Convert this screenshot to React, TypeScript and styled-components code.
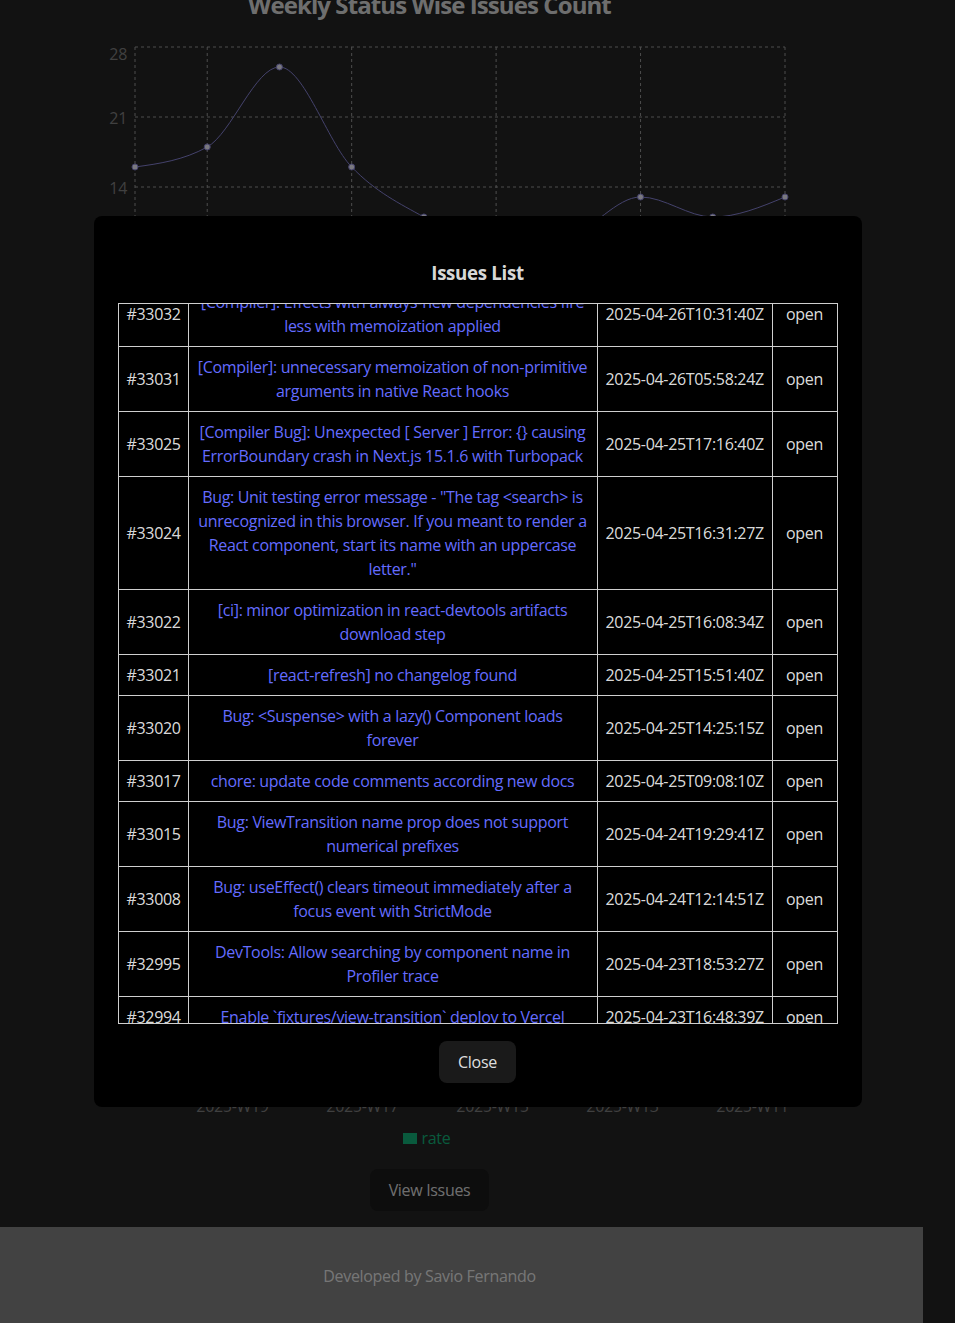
import React, { useLayoutEffect, useRef } from 'react';
import styled, { createGlobalStyle } from 'styled-components';

const GlobalStyle = createGlobalStyle`
  html,
  body {
    margin: 0;
    padding: 0;
  }

  body {
    background-color: #242424;
    color: rgba(255, 255, 255, 0.87);
    font-family: 'Open Sans', 'Noto Sans', sans-serif;
    font-size: 16px;
    line-height: 1.5;
    letter-spacing: -0.02em;
    overflow: hidden;
  }
`;

type Issue = {
  number: number;
  title: string;
  createdAt: string;
  state: string;
};

const issues: Issue[] = [
  {
    number: 33032,
    title:
      '[Compiler]: Effects with always-new dependencies fire less with memoization applied',
    createdAt: '2025-04-26T10:31:40Z',
    state: 'open',
  },
  {
    number: 33031,
    title:
      '[Compiler]: unnecessary memoization of non-primitive arguments in native React hooks',
    createdAt: '2025-04-26T05:58:24Z',
    state: 'open',
  },
  {
    number: 33025,
    title:
      '[Compiler Bug]: Unexpected [ Server ] Error: {} causing ErrorBoundary crash in Next.js 15.1.6 with Turbopack',
    createdAt: '2025-04-25T17:16:40Z',
    state: 'open',
  },
  {
    number: 33024,
    title:
      'Bug: Unit testing error message - "The tag <search> is unrecognized in this browser. If you meant to render a React component, start its name with an uppercase letter."',
    createdAt: '2025-04-25T16:31:27Z',
    state: 'open',
  },
  {
    number: 33022,
    title: '[ci]: minor optimization in react-devtools artifacts download step',
    createdAt: '2025-04-25T16:08:34Z',
    state: 'open',
  },
  {
    number: 33021,
    title: '[react-refresh] no changelog found',
    createdAt: '2025-04-25T15:51:40Z',
    state: 'open',
  },
  {
    number: 33020,
    title: 'Bug: <Suspense> with a lazy() Component loads forever',
    createdAt: '2025-04-25T14:25:15Z',
    state: 'open',
  },
  {
    number: 33017,
    title: 'chore: update code comments according new docs',
    createdAt: '2025-04-25T09:08:10Z',
    state: 'open',
  },
  {
    number: 33015,
    title: 'Bug: ViewTransition name prop does not support numerical prefixes',
    createdAt: '2025-04-24T19:29:41Z',
    state: 'open',
  },
  {
    number: 33008,
    title:
      'Bug: useEffect() clears timeout immediately after a focus event with StrictMode',
    createdAt: '2025-04-24T12:14:51Z',
    state: 'open',
  },
  {
    number: 32995,
    title: 'DevTools: Allow searching by component name in Profiler trace',
    createdAt: '2025-04-23T18:53:27Z',
    state: 'open',
  },
  {
    number: 32994,
    title: 'Enable `fixtures/view-transition` deploy to Vercel',
    createdAt: '2025-04-23T16:48:39Z',
    state: 'open',
  },
  {
    number: 32993,
    title: 'Bug: useActionState pending flag stuck after navigation',
    createdAt: '2025-04-23T14:02:11Z',
    state: 'open',
  },
];

// weeks newest -> oldest, same order as the x axis
const weeks = [
  '2025-W20',
  '2025-W19',
  '2025-W18',
  '2025-W17',
  '2025-W16',
  '2025-W15',
  '2025-W14',
  '2025-W13',
  '2025-W12',
  '2025-W11',
];
const openCounts = [16, 18, 26, 16, 11, 8, 9, 13, 11, 13];
const closeRates = [42, 55, 61, 38, 47, 52, 44, 58, 49, 40];

const PLOT_LEFT = 135;
const PLOT_RIGHT = 785;
const STEP = (PLOT_RIGHT - PLOT_LEFT) / (weeks.length - 1);
const TICK_INDEXES = [0, 1, 3, 5, 7, 9];

/* ---------- page ---------- */

const Page = styled.div`
  width: 923px;
`;

const Main = styled.main`
  width: 859px;
  margin-top: -13px;
  text-align: center;
`;

const ChartSection = styled.section<{ $gap?: number }>`
  margin-top: ${(p) => p.$gap ?? 0}px;
`;

const ChartTitle = styled.h2`
  margin: 0;
  font-size: 24px;
  line-height: 36px;
  font-weight: 700;
  letter-spacing: -0.038em;
`;

const ChartSvg = styled.svg`
  display: block;
  font-size: 16px;
`;

const Legend = styled.div`
  display: flex;
  justify-content: center;
  align-items: center;
  gap: 5px;
  margin-top: 7px;
  margin-left: -6px;
  line-height: 24px;
  color: #12b47a;
`;

const LegendSwatch = styled.span`
  width: 14px;
  height: 11px;
  background-color: #12b47a;
`;

const Button = styled.button`
  border: none;
  border-radius: 8px;
  padding: 9px 19px;
  font-family: inherit;
  font-size: 16px;
  font-weight: 500;
  line-height: 24px;
  letter-spacing: inherit;
  color: rgba(255, 255, 255, 0.87);
  background-color: #1a1a1a;
  cursor: pointer;
`;

const ViewButton = styled(Button)`
  margin-top: 19px;
`;

const Footer = styled.footer`
  margin-top: 16px;
  padding: 37px 64px 37px 0;
  background-color: #848484;
  text-align: center;
`;

/* ---------- modal ---------- */

const Overlay = styled.div`
  position: fixed;
  inset: 0;
  display: flex;
  align-items: center;
  justify-content: center;
  background-color: rgba(0, 0, 0, 0.5);
`;

const ModalCard = styled.div`
  width: 768px;
  box-sizing: border-box;
  padding: 24px;
  display: flex;
  flex-direction: column;
  align-items: center;
  background-color: #000;
  border-radius: 8px;
`;

const ModalTitle = styled.h3`
  margin: 19px 0 16px;
  font-size: 18.72px;
  line-height: 28px;
  font-weight: 700;
`;

const TableScroller = styled.div`
  align-self: stretch;
  height: 721px;
  box-sizing: border-box;
  overflow-y: auto;
  scrollbar-width: none;
  border-top: 1px solid #cfcfcf;
  border-bottom: 1px solid #cfcfcf;

  &::-webkit-scrollbar {
    display: none;
  }
`;

const IssuesTable = styled.table`
  width: calc(100% - 1px);
  border-collapse: collapse;
  table-layout: fixed;
`;

const Cell = styled.td<{ $nowrap?: boolean }>`
  border: 1px solid #cfcfcf;
  padding: 8px;
  text-align: center;
  vertical-align: middle;
  line-height: 24px;
  white-space: ${(p) => (p.$nowrap ? 'nowrap' : 'normal')};
`;

const IssueLink = styled.a`
  color: #646cff;
  text-decoration: none;
`;

const CloseButton = styled(Button)`
  margin-top: 17px;
`;

/* ---------- chart helpers ---------- */

const monotonePath = (pts: [number, number][]): string => {
  const n = pts.length;
  const t: number[] = new Array(n).fill(0);
  for (let i = 1; i < n - 1; i++) {
    const h0 = pts[i][0] - pts[i - 1][0];
    const h1 = pts[i + 1][0] - pts[i][0];
    const s0 = (pts[i][1] - pts[i - 1][1]) / h0;
    const s1 = (pts[i + 1][1] - pts[i][1]) / h1;
    const p = (s0 * h1 + s1 * h0) / (h0 + h1);
    t[i] =
      (Math.sign(s0) + Math.sign(s1)) *
        Math.min(Math.abs(s0), Math.abs(s1), 0.5 * Math.abs(p)) || 0;
  }
  const hs = pts[1][0] - pts[0][0];
  t[0] = ((3 * (pts[1][1] - pts[0][1])) / hs - t[1]) / 2;
  const he = pts[n - 1][0] - pts[n - 2][0];
  t[n - 1] = ((3 * (pts[n - 1][1] - pts[n - 2][1])) / he - t[n - 2]) / 2;

  let d = `M${pts[0][0]},${pts[0][1]}`;
  for (let i = 0; i < n - 1; i++) {
    const dx = (pts[i + 1][0] - pts[i][0]) / 3;
    d += `C${pts[i][0] + dx},${pts[i][1] + dx * t[i]},${pts[i + 1][0] - dx},${
      pts[i + 1][1] - dx * t[i + 1]
    },${pts[i + 1][0]},${pts[i + 1][1]}`;
  }
  return d;
};

const GRID = '#9a9a9a';
const TICK = '#808080';

const StatusLineChart: React.FC = (): JSX.Element => {
  // svg starts 23px below page top: plot 24..304
  const top = 24;
  const bottom = 304;
  const yOf = (v: number) => bottom - (v / 28) * (bottom - top);
  const points: [number, number][] = openCounts.map((v, i) => [
    PLOT_LEFT + i * STEP,
    yOf(v),
  ]);

  return (
    <ChartSvg width={859} height={400}>
      {[0, 7, 14, 21, 28].map((v) => (
        <g key={v}>
          <line
            x1={PLOT_LEFT}
            x2={PLOT_RIGHT}
            y1={yOf(v)}
            y2={yOf(v)}
            stroke={GRID}
            strokeDasharray="3 3"
          />
          <text
            x={127}
            y={yOf(v) + (v === 28 ? 13 : 7)}
            textAnchor="end"
            fill={TICK}
          >
            {v}
          </text>
        </g>
      ))}
      {TICK_INDEXES.map((i) => (
        <g key={i}>
          <line
            x1={PLOT_LEFT + i * STEP}
            x2={PLOT_LEFT + i * STEP}
            y1={top}
            y2={bottom}
            stroke={GRID}
            strokeDasharray="3 3"
          />
          <text
            x={PLOT_LEFT + i * STEP}
            y={bottom + 24}
            textAnchor="middle"
            fill={TICK}
          >
            {weeks[i]}
          </text>
        </g>
      ))}
      <path d={monotonePath(points)} fill="none" stroke="#8884d8" />
      {points.map(([x, y]) => (
        <circle key={x} cx={x} cy={y} r={3} fill="#f4f2ff" stroke="#8884d8" />
      ))}
      <rect x={382} y={352} width={14} height={11} fill="#8884d8" />
      <text x={400} y={363} fill="#8884d8">
        open
      </text>
    </ChartSvg>
  );
};

const RateBarChart: React.FC = (): JSX.Element => {
  const top = 40;
  const bottom = 590;
  const band = (PLOT_RIGHT - PLOT_LEFT) / weeks.length;
  const yOf = (v: number) => bottom - (v / 80) * (bottom - top);

  return (
    <ChartSvg width={859} height={620}>
      {[0, 20, 40, 60, 80].map((v) => (
        <g key={v}>
          <line
            x1={PLOT_LEFT}
            x2={PLOT_RIGHT}
            y1={yOf(v)}
            y2={yOf(v)}
            stroke={GRID}
            strokeDasharray="3 3"
          />
          <text x={127} y={yOf(v) + 6} textAnchor="end" fill={TICK}>
            {v}
          </text>
        </g>
      ))}
      {closeRates.map((v, i) => (
        <rect
          key={weeks[i]}
          x={PLOT_LEFT + i * band + 8}
          y={yOf(v)}
          width={band - 16}
          height={bottom - yOf(v)}
          fill="#12b47a"
        />
      ))}
      {weeks.map((w, i) =>
        i % 2 === 1 ? (
          <text
            key={w}
            x={PLOT_LEFT + i * band + band / 2}
            y={bottom + 23}
            textAnchor="middle"
            fill={TICK}
          >
            {w}
          </text>
        ) : null,
      )}
    </ChartSvg>
  );
};

/* ---------- modal ---------- */

type IssuesModalProps = {
  issues: Issue[];
};

const IssuesModal: React.FC<IssuesModalProps> = ({ issues }): JSX.Element => {
  const scrollerRef = useRef<HTMLDivElement>(null);

  useLayoutEffect(() => {
    if (scrollerRef.current) scrollerRef.current.scrollTop = 23;
  }, []);

  return (
    <Overlay>
      <ModalCard>
        <ModalTitle>Issues List</ModalTitle>
        <TableScroller ref={scrollerRef}>
          <IssuesTable>
            <colgroup>
              <col style={{ width: 70 }} />
              <col style={{ width: 409 }} />
              <col style={{ width: 175 }} />
              <col style={{ width: 65 }} />
            </colgroup>
            <tbody>
              {issues.map((issue) => (
                <tr key={issue.number}>
                  <Cell>#{issue.number}</Cell>
                  <Cell>
                    <IssueLink href="#">{issue.title}</IssueLink>
                  </Cell>
                  <Cell $nowrap>{issue.createdAt}</Cell>
                  <Cell>{issue.state}</Cell>
                </tr>
              ))}
            </tbody>
          </IssuesTable>
        </TableScroller>
        <CloseButton>Close</CloseButton>
      </ModalCard>
    </Overlay>
  );
};

const App: React.FC = (): JSX.Element => {
  return (
    <>
      <GlobalStyle />
      <Page>
        <Main>
          <ChartSection>
            <ChartTitle>Weekly Status Wise Issues Count</ChartTitle>
            <StatusLineChart />
          </ChartSection>
          <ChartSection $gap={40}>
            <ChartTitle>Weekly Issues Close Rate</ChartTitle>
            <RateBarChart />
          </ChartSection>
          <Legend>
            <LegendSwatch />
            rate
          </Legend>
          <ViewButton>View Issues</ViewButton>
        </Main>
        <Footer>Developed by Savio Fernando</Footer>
      </Page>
      <IssuesModal issues={issues} />
    </>
  );
};

export default App;
